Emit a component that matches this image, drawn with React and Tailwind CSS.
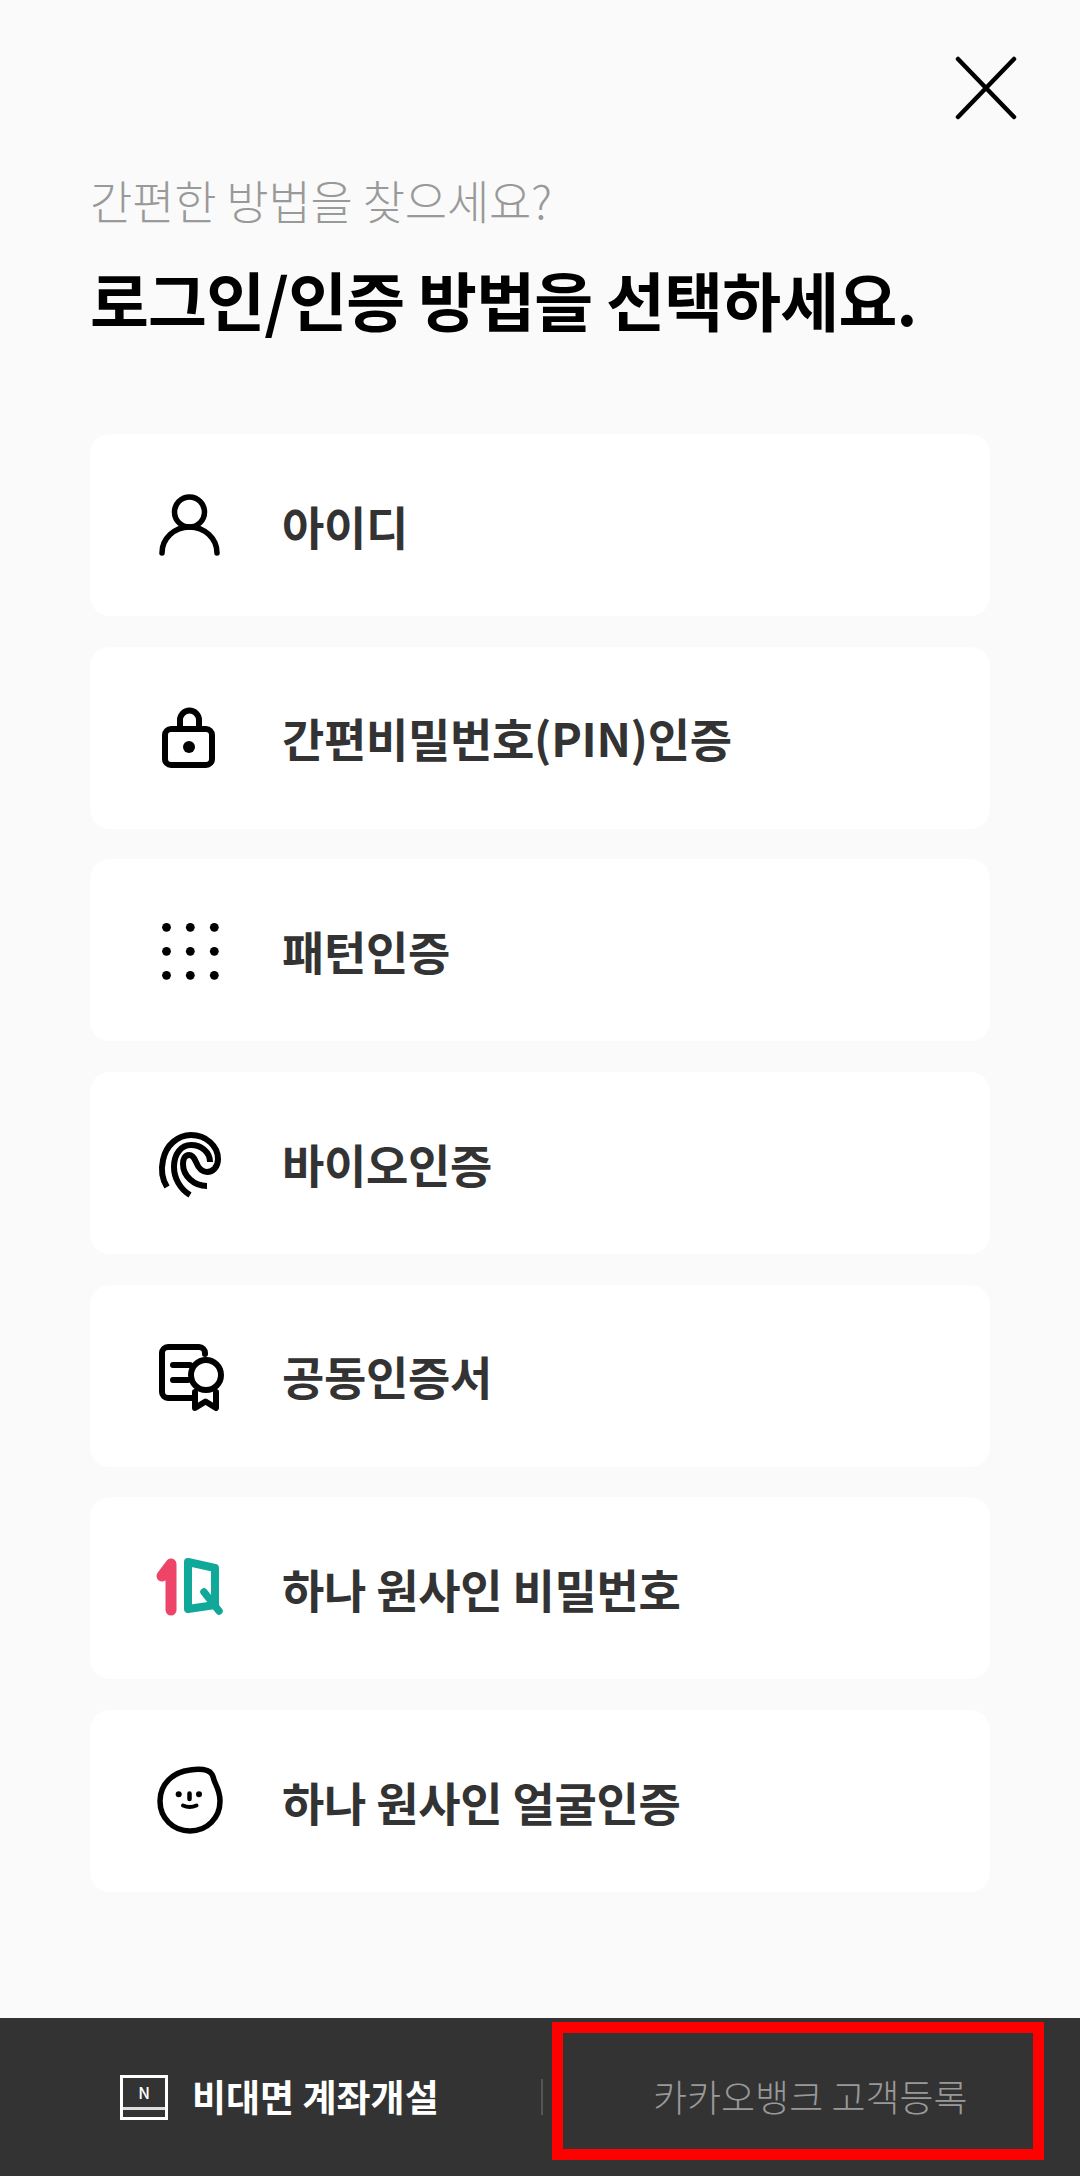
import React from 'react';

const UserIcon = () => (
  <svg width="120" height="120" viewBox="0 -5 120 120" fill="none" stroke="#000" strokeWidth="5.5" strokeLinecap="round">
    <circle cx="59.5" cy="42" r="15" />
    <path d="M32 83a27.5 26 0 0 1 55 0" />
  </svg>
);

const LockIcon = () => (
  <svg width="120" height="120" viewBox="0 -2 120 120" fill="none" stroke="#000" strokeWidth="6">
    <rect x="35" y="49" width="47" height="36" rx="6" />
    <path d="M50 48v-8a9.5 9.5 0 0 1 19 0v8" />
    <circle cx="59" cy="67" r="6" fill="#000" stroke="none" />
  </svg>
);

const PatternIcon = () => (
  <svg width="120" height="120" viewBox="0 -4 120 120" fill="#000">
    {[33.3, 57.3, 81.3].map((y) =>
      [36.5, 60.3, 84.3].map((x) => <circle key={`${x}-${y}`} cx={x} cy={y} r="4.4" />)
    )}
  </svg>
);

const BioIcon = () => (
  <svg width="120" height="120" viewBox="0 -2 120 120" fill="none" stroke="#000" strokeWidth="6">
    <path d="M37 82C32 74 31 64 33 55C36 40 48 30 61 30C76 30 88 41 88 54C88 62 83 67 77 67C71 67 68 62 66 57C64 52 62 50 59 50C55 50 53 54 53 59C53 71 64 81 77 81" />
    <path d="M60 90C50 84 44 73 44 62C44 49 51 40 61 40C71 40 80 47 80 57" />
  </svg>
);

const CertIcon = () => (
  <svg width="120" height="120" viewBox="0 -4 120 120" fill="none" stroke="#000" strokeWidth="6" strokeLinecap="round" strokeLinejoin="round">
    <path d="M75 34V33a6 6 0 0 0-6-6H38a6 6 0 0 0-6 6V72a6 6 0 0 0 6 6H64" />
    <path d="M43 45H60M43 60H58" />
    <path d="M65 72V88L75.5 81.5L86 88V72" />
    <circle cx="76" cy="55" r="15" fill="#fff" />
  </svg>
);

const OneQIcon = () => (
  <svg width="120" height="120" viewBox="0 -1 120 120" fill="none" strokeLinecap="round" strokeLinejoin="round">
    <path d="M32 47L41 35V81" stroke="#ee4468" strokeWidth="11" />
    <path d="M58 33L85 39V76L58 80Z" stroke="#10a898" strokeWidth="8" />
    <path d="M74 63L89 82" stroke="#10a898" strokeWidth="7.5" />
  </svg>
);

const FaceIcon = () => (
  <svg width="120" height="120" viewBox="0 -4 120 120" fill="none" stroke="#000" strokeWidth="5.5" strokeLinecap="round">
    <path d="M60 25C66 24 73 24 77 25.5C82 27 83 31 84 35C85 39 90 45 90 56C90 73 77 86 60 86C43 86 30 73 30 56C30 39 43 27 60 25Z" />
    <circle cx="48.7" cy="49.3" r="3" fill="#000" stroke="none" />
    <circle cx="69" cy="49.3" r="3" fill="#000" stroke="none" />
    <path d="M59.5 48.5V54" strokeWidth="4.5" />
    <path d="M53 60.5Q59.5 63.5 66.5 60.5" strokeWidth="4" fill="#000" />
  </svg>
);

const methods = [
  { label: '아이디', icon: UserIcon },
  { label: '간편비밀번호(PIN)인증', icon: LockIcon },
  { label: '패턴인증', icon: PatternIcon },
  { label: '바이오인증', icon: BioIcon },
  { label: '공동인증서', icon: CertIcon },
  { label: '하나 원사인 비밀번호', icon: OneQIcon },
  { label: '하나 원사인 얼굴인증', icon: FaceIcon },
];

const MethodCard = ({ method }) => {
  const Icon = method.icon;
  return (
    <div className="flex h-[182px] items-center gap-8 rounded-[20px] bg-white pl-10">
      <Icon />
      <span className="text-[46px] font-bold tracking-[-0.3px] text-[#333]">{method.label}</span>
    </div>
  );
};

const App = () => {
  return (
    <div className="relative flex h-[2176px] w-[1080px] flex-col bg-[#fafafa] font-['Noto_Sans_CJK_KR','Noto_Sans',sans-serif]">
      {/* Close */}
      <div className="flex justify-end pr-[63px] pt-[56px]">
        <svg width="64" height="64" viewBox="0 0 64 64" stroke="#000" strokeWidth="4.5" strokeLinecap="round">
          <path d="M5 3L61 61M61 3L5 61" />
        </svg>
      </div>

      {/* Title */}
      <div className="px-[90px] pt-[47px]">
        <p className="text-[46px] font-light leading-[64px] tracking-[-0.2px] text-[#999]">간편한 방법을 찾으세요?</p>
        <h1 className="mt-[29px] text-[64px] font-bold leading-[76px] tracking-[-0.8px] text-black">로그인/인증 방법을 선택하세요.</h1>
      </div>

      {/* Methods */}
      <div className="mt-[98px] flex flex-col gap-[30.7px] px-[90px]">
        {methods.map((method, index) => (
          <MethodCard key={index} method={method} />
        ))}
      </div>

      {/* Footer */}
      <div className="mt-auto flex h-[158px] items-center bg-[#333]">
        <div className="flex w-[541px] items-center pl-[120px]">
          <div className="flex h-[45px] w-[48px] flex-col border-[3px] border-white">
            <span className="flex flex-1 items-center justify-center text-[16px] font-medium leading-none text-white">N</span>
            <span className="h-[10px] border-t-[3px] border-[#ddd]" />
          </div>
          <span className="ml-[24px] text-[37px] font-bold text-white">비대면 계좌개설</span>
        </div>
        <div className="h-[36px] w-[2px] bg-[#555]" />
        <span className="ml-[110px] text-[37px] font-light text-[#999]">카카오뱅크 고객등록</span>
      </div>

      {/* Red annotation box */}
      <div className="absolute left-[552px] top-[2022px] h-[138px] w-[492px] border-[11px] border-[#ff0000]" />
    </div>
  );
};

export default App;
